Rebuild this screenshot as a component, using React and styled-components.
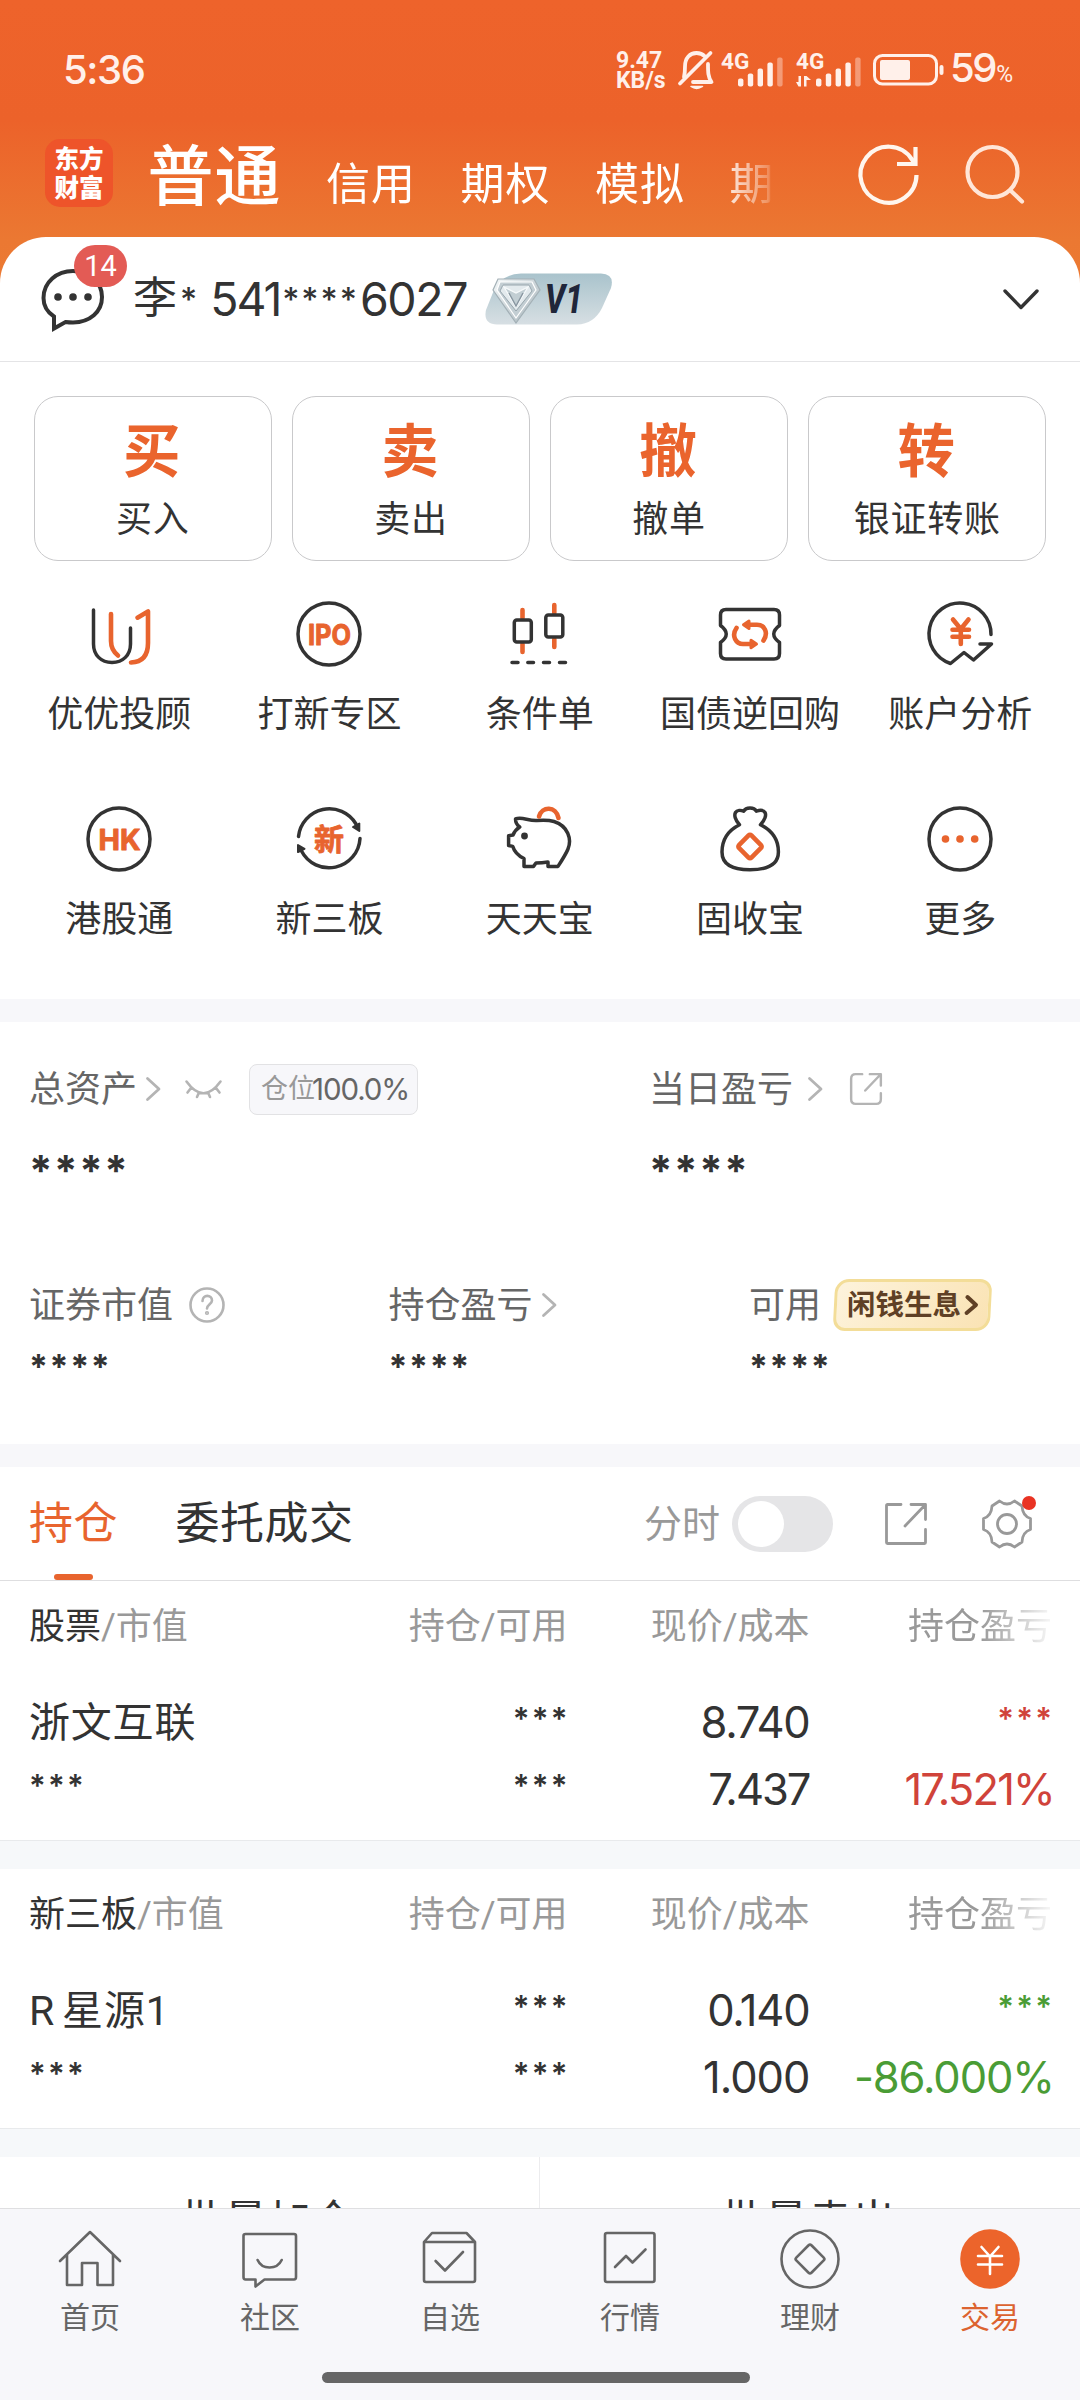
import React from "react";
import styled, { createGlobalStyle } from "styled-components";

const ORANGE = "#e8642e";
const INK = "#333333";
const GREY = "#666666";
const PALE = "#999999";

const GlobalStyle = createGlobalStyle`
  * { box-sizing: border-box; }
  body {
    margin: 0;
    background: #fff;
    font-family: Roboto, "Noto Sans CJK SC", sans-serif;
    color: ${INK};
  }
  svg { display: block; flex: none; overflow: visible; }
`;

const Screen = styled.div`
  width: 1080px;
  height: 2400px;
  display: flex;
  flex-direction: column;
  overflow: hidden;
  background: #fff;
`;

/* ---------- header ---------- */
const Header = styled.header`
  flex: none;
  height: 290px;
  margin-bottom: -53px;
  background: linear-gradient(180deg, #ee632b 0, #ec622a 120px, #eb7832 240px, #ec7a33 290px);
  color: #fff;
`;
const StatusBar = styled.div`
  height: 139px;
  padding: 43px 64px 0 63px;
  display: flex;
  justify-content: space-between;
  align-items: flex-start;
  color: #fff0ea;
`;
const Clock = styled.div`
  font-family: Inter, sans-serif;
  font-size: 40px;
  font-weight: 500;
  line-height: 54px;
  letter-spacing: -1.4px;
`;
const StatusIcons = styled.div`
  display: flex;
  height: 54px;
  align-items: center;
`;
const Speed = styled.div`
  width: 62px;
  padding-top: 2px;
  font-size: 23px;
  font-weight: 700;
  line-height: 20px;
  white-space: nowrap;
`;
const Percent = styled.div`
  display: flex;
  align-items: baseline;
  width: 66px;
  margin-left: 6px;
  padding-top: 2px;
  font-family: Inter, sans-serif;
  font-size: 40px;
  font-weight: 500;
  line-height: 54px;
  letter-spacing: -2.4px;
`;
const PercentSign = styled.span`
  font-family: Roboto, sans-serif;
  font-size: 23px;
  font-weight: 400;
  margin-left: 1px;
`;
const HeaderNav = styled.div`
  height: 68px;
  padding-left: 45px;
  padding-right: 55px;
  display: flex;
`;
const Logo = styled.div`
  width: 68px;
  height: 68px;
  border-radius: 15px;
  background: #ee542a;
  padding-top: 6px;
  font-size: 24.5px;
  font-weight: 900;
  line-height: 29px;
  text-align: center;
`;
const Modes = styled.nav`
  width: 655px;
  height: 100px;
  margin: -16px 0 0 34.5px;
  display: flex;
  align-items: baseline;
  gap: 44.5px;
  overflow: hidden;
  white-space: nowrap;
  line-height: 109px;
  mask-image: linear-gradient(90deg, #000 570px, rgba(0, 0, 0, 0.25) 620px, transparent 624px);
`;
const Mode = styled.span`
  font-size: ${(p) => (p.$active ? 66 : 44)}px;
  font-weight: ${(p) => (p.$active ? 500 : 400)};
  letter-spacing: 1px;
  flex: none;
`;
const HeaderActions = styled.div`
  margin-left: auto;
  padding-top: 5px;
  display: flex;
  gap: 46px;
`;

/* ---------- account ---------- */
const Account = styled.section`
  flex: none;
  height: 125px;
  padding: 0 40px;
  display: flex;
  align-items: center;
  background: #fff;
  border-radius: 46px 46px 0 0;
  border-bottom: 1px solid #e4e4e6;
`;
const Messages = styled.div`
  position: relative;
  width: 66px;
  height: 66px;
`;
const Count = styled.span`
  position: absolute;
  left: 34px;
  top: -21px;
  width: 53px;
  height: 42px;
  border-radius: 21px;
  background: #e35b55;
  color: #fff;
  font-size: 29px;
  line-height: 43px;
  text-align: center;
`;
const AccountName = styled.div`
  display: flex;
  align-items: center;
  margin-left: 27px;
  font-size: 44px;
  line-height: 60px;
  height: 60px;
`;
const Digits = styled.span`
  display: block;
  width: ${(p) => p.$w}px;
  font-family: Inter, sans-serif;
  font-size: 46.5px;
  letter-spacing: ${(p) => p.$track || 0}px;
  white-space: nowrap;
`;
const Stars = styled.span`
  display: block;
  font-family: Inter, sans-serif;
  font-weight: ${(p) => p.$weight || 500};
  font-size: ${(p) => p.$size}px;
  letter-spacing: ${(p) => p.$track || 0}px;
  margin-right: ${(p) => -(p.$track || 0)}px;
  line-height: ${(p) => p.$line}px;
  color: ${(p) => p.$color || "inherit"};
  white-space: nowrap;
`;
const ChevronSlot = styled.div`
  margin-left: auto;
`;

/* ---------- shortcuts ---------- */
const Quick = styled.section`
  flex: none;
  display: grid;
  grid-template-columns: repeat(4, 1fr);
  gap: 20.5px;
  padding: 34px 34px 0;
  height: 199px;
`;
const QuickCard = styled.button`
  display: flex;
  flex-direction: column;
  align-items: center;
  height: 165px;
  padding: 21px 0 0;
  border: 1px solid #c9c9cb;
  border-radius: 24px;
  background: #fff;
  font-family: inherit;
  color: ${INK};
`;
const QuickGlyph = styled.span`
  font-size: 57.5px;
  line-height: 70px;
  font-weight: 700;
  color: #ea642d;
  margin-right: 2px;
`;
const QuickLabel = styled.span`
  font-size: 36px;
  line-height: 50px;
  margin-top: 7px;
  letter-spacing: 0.7px;
`;
const Tools = styled.section`
  flex: none;
  height: 438px;
  padding: 40px 15px 0 13.5px;
  display: grid;
  grid-template-columns: repeat(5, 1fr);
  grid-auto-rows: 205px;
`;
const Tool = styled.div`
  display: flex;
  flex-direction: column;
  align-items: center;
  font-size: 36px;
  line-height: 50px;
  gap: 23px;
  white-space: nowrap;
`;
const ToolLabel = styled.span`
  padding-left: 1px;
`;
const Band = styled.div`
  flex: none;
  height: ${(p) => p.$height}px;
  background: ${(p) => (p.$cool ? "#f6f8fa" : "#f7f7fa")};
  border-top: ${(p) => (p.$cool ? "1px solid #e8eaec" : "none")};
`;

/* ---------- assets ---------- */
const Assets = styled.section`
  flex: none;
  height: 422px;
  padding: 40px 30px 0 29px;
  color: ${GREY};
`;
const AssetRow = styled.div`
  display: grid;
  grid-template-columns: ${(p) => p.$columns};
  height: ${(p) => p.$height}px;
`;
const AssetLine = styled.div`
  display: flex;
  align-items: center;
  height: 54px;
  font-size: 36px;
  line-height: 56px;
  white-space: nowrap;
`;
const AssetName = styled.span`
  padding-top: 1px;
`;
const AssetValue = styled.div`
  padding-top: ${(p) => p.$top}px;
  color: ${INK};
`;
const Gap = styled.span`
  flex: none;
  width: ${(p) => p.$w}px;
`;
const Position = styled.div`
  display: flex;
  align-items: center;
  height: 51px;
  width: 169px;
  padding-left: 11px;
  border: 1px solid #e2e2e4;
  border-radius: 8px;
  background: #f7f7fa;
  font-size: 27px;
  line-height: 50px;
  color: ${PALE};
`;
const PositionValue = styled.span`
  font-family: Inter, sans-serif;
  font-size: 29.5px;
  letter-spacing: -1.1px;
  color: ${GREY};
  margin-left: -3px;
`;
const Interest = styled.div`
  display: flex;
  align-items: center;
  justify-content: center;
  gap: 4px;
  width: 157px;
  height: 52px;
  border: 3px solid #f3dd98;
  border-radius: 14px 12px 14px 12px;
  transform: skewX(-3deg);
  background: linear-gradient(120deg, #fdf3dc, #fae3b4);
  color: #5f4025;
  font-size: 28.5px;
  font-weight: 700;
  line-height: 48px;
`;
const InterestLabel = styled.span`
  padding-top: 1px;
  transform: skewX(3deg);
`;

/* ---------- holdings ---------- */
const Tabs = styled.section`
  flex: none;
  height: 114px;
  padding: 0 48.5px 0 29px;
  display: flex;
  align-items: center;
  border-bottom: 1px solid #dedee0;
`;
const Tab = styled.div`
  display: flex;
  flex-direction: column;
  align-items: center;
  height: 113px;
  padding-top: 26px;
  margin-right: 57.5px;
  font-size: 44px;
  line-height: 62px;
  letter-spacing: 0.5px;
  color: ${(p) => (p.$active ? ORANGE : INK)};
  &::after {
    content: "";
    width: 39px;
    height: 6px;
    margin-top: 19px;
    border-radius: 3px;
    background: ${(p) => (p.$active ? ORANGE : "transparent")};
  }
`;
const TabTools = styled.div`
  margin-left: auto;
  display: flex;
  align-items: center;
  height: 60px;
  font-size: 38px;
  line-height: 60px;
  color: ${PALE};
`;
const Toggle = styled.div`
  width: 101px;
  height: 56px;
  margin: 0 52px 0 12px;
  padding: 5px 6px;
  border-radius: 28px;
  background: #e5e5e7;
  &::before {
    content: "";
    display: block;
    width: 46px;
    height: 46px;
    border-radius: 50%;
    background: #fff;
  }
`;
const GearSlot = styled.div`
  position: relative;
  margin-left: 54.5px;
`;
const Dot = styled.span`
  position: absolute;
  right: -4px;
  top: -3px;
  width: 14px;
  height: 14px;
  border-radius: 50%;
  background: #e93323;
`;
const Table = styled.section`
  flex: none;
  height: ${(p) => p.$height}px;
  padding-top: ${(p) => p.$top}px;
  padding-left: 29px;
`;
const TableRow = styled.div`
  display: grid;
  grid-template-columns: 237px 301.5px 242px 242.5px;
  height: ${(p) => p.$height}px;
  line-height: ${(p) => p.$height}px;
  font-size: ${(p) => p.$size}px;
  color: ${(p) => p.$color || INK};
  white-space: nowrap;
`;
const Cell = styled.div`
  display: flex;
  justify-content: ${(p) => (p.$left ? "flex-start" : "flex-end")};
  color: ${(p) => p.$color || "inherit"};
`;
const Strong = styled.span`
  color: ${INK};
`;
const Fading = styled(Cell)`
  mask-image: linear-gradient(90deg, #000 170px, rgba(0, 0, 0, 0.12) 238px);
`;
const Num = styled.span`
  height: 65px;
  line-height: 65px;
  font-family: Inter, sans-serif;
  font-size: 43.5px;
  letter-spacing: ${(p) => p.$track || 0}px;
  margin-right: ${(p) => p.$edge || 0}px;
`;
const StockName = styled.span`
  display: flex;
  font-size: 41px;
  letter-spacing: 0.8px;
`;
const HoldingBody = styled.div`
  margin-top: 38px;
`;
const Batch = styled.section`
  flex: none;
  height: 51px;
  overflow: hidden;
  display: grid;
  grid-template-columns: 1fr 1fr;
`;
const BatchButton = styled.div`
  padding-top: 34px;
  padding-right: 3px;
  font-size: 43px;
  line-height: 60px;
  letter-spacing: 0.8px;
  text-align: center;
  &:first-child { border-right: 1px solid #ececee; }
`;

/* ---------- bottom bar ---------- */
const BottomBar = styled.nav`
  flex: none;
  height: 192px;
  border-top: 1px solid #dfdfe1;
  background: #f7f7fa;
  display: flex;
  flex-direction: column;
  align-items: center;
`;
const BottomItems = styled.div`
  width: 100%;
  height: 163px;
  padding-top: 18px;
  display: grid;
  grid-template-columns: repeat(6, 1fr);
`;
const BottomItem = styled.div`
  display: flex;
  flex-direction: column;
  align-items: center;
  font-size: 30px;
  line-height: 42px;
  gap: 6px;
  color: ${(p) => (p.$active ? "#dc632f" : GREY)};
`;
const HomeBar = styled.div`
  width: 428px;
  height: 11px;
  margin-right: 8px;
  border-radius: 6px;
  background: #666;
`;

/* ---------- drawings ---------- */
const Line = ({ w = 66, h = w, vb, sw = 3.5, color = INK, children }) => (
  <svg width={w} height={h} viewBox={vb || `0 0 ${w} ${h}`} fill="none" stroke={color}
    strokeWidth={sw} strokeLinecap="round" strokeLinejoin="round">{children}</svg>
);

const Chevron = ({ color = "#b4b4b4" }) => (
  <Line w={15} h={24} sw={2.8} color={color}><path d="M1.5 1.5 13 12 1.5 22.5" /></Line>
);

const Bell = () => (
  <Line w={36} h={38} sw={3.8} color="#fff0ea">
    <path d="M6 26C7 22 7 19 7 15.500C7 7 12 2 18.500 2C22 2 25 3.500 27 5.500M30 13C30 21 30 26 33.500 31H15" />
    <path d="M32.500 2 2 32.500" />
    <path d="M13 35.500H24.500Q18.500 39.500 13 35.500Z" strokeWidth="1.500" fill="#fff0ea" />
  </Line>
);

const Signal = ({ arrows }) => {
  const x = arrows ? 20 : 17;
  return (
    <svg width="64" height="36" viewBox="0 0 64 36" fill="#fff0ea">
      <text x="0" y="17" fontFamily="Roboto" fontWeight="700" fontSize="22.500">4G</text>
      {[8, 13, 18, 24, 29].map((h, i) => (
        <rect key={h} x={x + i * 9.8} y={34.5 - h} width="5.400" height={h} rx="2" opacity={i === 4 ? 0.4 : 1} />
      ))}
      {arrows && <path d="M5 24V34.500H2.500L0 30H2.500V24ZM8 24H10.500L15 28H10.500V34.500H8Z" />}
    </svg>
  );
};

const Battery = () => (
  <svg width="71" height="32" viewBox="0 0 71 32" fill="#fff0ea">
    <rect x="1.500" y="1.500" width="62" height="28.500" rx="8" fill="none" stroke="#fff0ea" strokeWidth="3" />
    <rect x="7" y="6" width="30" height="20" rx="2" />
    <rect x="66.500" y="11" width="4" height="10" rx="2" />
  </svg>
);

const Diamond = () => (
  <svg width="128" height="52" viewBox="0 0 128 52">
    <defs>
      <linearGradient id="plate" x1="0" y1="0" x2="0" y2="1">
        <stop offset="0" stopColor="#a9c3cc" /><stop offset="1" stopColor="#d7dfe3" />
      </linearGradient>
      <linearGradient id="gem" x1="0" y1="0" x2="1" y2="1">
        <stop offset="0" stopColor="#f5f9fa" /><stop offset="1" stopColor="#a3b1b8" />
      </linearGradient>
    </defs>
    <path d="M36 .5H116Q130 1 126 15L117 35Q109 51 92 51.500H12Q-2 51 1 37L9 17Q17 1 36 .5Z" fill="url(#plate)" />
    <path d="M13 6H49L55 17 31 50 8 17Z" fill="url(#gem)" stroke="#a3b0b6" strokeWidth="1.200" />
    <path d="M15 9H47L51 17 31 45 12 17Z" fill="#c3ced3" stroke="#fff" strokeWidth="1.200" />
    <path d="M18 12H44L47 18 31 38 15 18Z" fill="#e3eaed" stroke="#98a6ad" strokeWidth="1" />
    <path d="M19 14 31 20 43 14 31 34Z" fill="#c2ced3" stroke="#f7fafb" strokeWidth="1.200" />
    <path d="M24 20 31 33 38 20" fill="none" stroke="#8896a0" strokeWidth="1.400" />
    <text x="60" y="40" fontFamily="Roboto" fontSize="40" fontWeight="800" fontStyle="italic" fill="#20263a" textLength="38" lengthAdjust="spacingAndGlyphs">V1</text>
  </svg>
);

const ShareBox = ({ w, sw, color, r = 3 }) => (
  <svg width={w} height={w} viewBox="0 0 42 42" fill="none" stroke={color} strokeWidth={sw} strokeLinecap="round" strokeLinejoin="round">
    <path d={`M16 1.500H${1.5 + r}Q1.500 1.500 1.500 ${1.5 + r}V${40.5 - r}Q1.500 40.500 ${1.5 + r} 40.500H${40.5 - r}Q40.500 40.500 40.500 ${40.5 - r}V26.500M26 1.500H40.500V16.500M40 2 20 23`} />
  </svg>
);

const toolIcons = {
  advisor: (
    <Line>
      <path d="M7.500 9V43C7.500 54 15 61.500 26 61.500S44.500 54 44.500 43V27" />
      <g stroke={ORANGE} strokeWidth="4.600">
        <path d="M25 13V40Q25 49 32 54.500M51.500 16.700 62 10.500V42Q62 61 45 61.500" />
      </g>
    </Line>
  ),
  ipo: (
    <Line>
      <circle cx="33" cy="33" r="31" />
      <text x="12" y="43.500" fill={ORANGE} stroke={ORANGE} strokeWidth="1" fontFamily="Inter" fontWeight="700" fontSize="28.500" textLength="43" lengthAdjust="spacingAndGlyphs">IPO</text>
    </Line>
  ),
  candles: (
    <Line>
      <g stroke={ORANGE} strokeWidth="4.600"><path d="M16.500 9V17M16.500 43V51M48.300 4V12M48.300 38V46" /></g>
      <rect x="8.300" y="19" width="17" height="22" rx="2.500" />
      <rect x="39.800" y="14" width="17" height="22" rx="2.500" />
      <path d="M6 61.500H12M21.800 61.500H27.500M37.500 61.500H43.500M53.500 61.500H59.500" />
    </Line>
  ),
  ticket: (
    <Line>
      <path d="M9 8.500H57Q62.500 8.500 62.500 14V24.500Q51 33 62.500 41.500V52.500Q62.500 58 57 58H9Q3.500 58 3.500 52.500V41.500Q15 33 3.500 24.500V14Q3.500 8.500 9 8.500Z" />
      <g stroke={ORANGE} strokeWidth="4.600">
        <path d="M46.500 39.500C52 31 47 23.700 40 23.700H32M19.500 27C14 35 19 43 26 43H34" />
        <path d="M26.500 23.700 32 20V27.500ZM39.500 43 34 39.300V46.700Z" fill={ORANGE} strokeWidth="3" />
      </g>
    </Line>
  ),
  analysis: (
    <Line>
      <path d="M64 33.500A31 31 0 1 0 23.500 62.500L37 51.500 46.500 59 64.500 43H53" />
      <g stroke={ORANGE} strokeWidth="4.600"><path d="M26 18.500 33.800 28 41.500 18.500M25.500 28.700H42M25.500 35.700H42M33.800 29V43" /></g>
    </Line>
  ),
  hk: (
    <Line>
      <circle cx="33" cy="33" r="31" />
      <text x="12.500" y="43.500" fill={ORANGE} stroke={ORANGE} strokeWidth="1" fontFamily="Inter" fontWeight="700" fontSize="28.500" textLength="42" lengthAdjust="spacingAndGlyphs">HK</text>
    </Line>
  ),
  board: (
    <Line>
      <path d="M2.500 30.500A31 31 0 0 1 60 18M64 32.500A31 31 0 0 1 5.500 45" />
      <path d="M57 21 63.300 17.500V25ZM2 46V39L8.500 42.800Z" fill={INK} strokeWidth="2" />
      <text x="33" y="44" textAnchor="middle" fill={ORANGE} stroke={ORANGE} strokeWidth=".8" fontFamily="Noto Sans CJK SC" fontWeight="700" fontSize="30">新</text>
    </Line>
  ),
  pig: (
    <Line>
      <path d="M9.500 13C16 10.500 22 15 31 14.500C38 14 43 14 48 15.500C62 20 66 33 62 43Q60 48 52 60.400H42V56Q36 57 30 57L27.500 60.400H18V52.500Q9 48 6.800 40.400L2.600 39.500V29.700L7 29Q9 24 13.700 21Q9.500 18 9.500 13Z" />
      <circle cx="18.500" cy="30" r="3.400" fill={INK} stroke="none" />
      <path d="M33 10.500C36 0 50 0 52.500 12" stroke={ORANGE} strokeWidth="4.600" />
    </Line>
  ),
  bag: (
    <Line>
      <path d="M22.500 18.700C18 14 17 9 18.500 6.500C20 4 24 4 26.700 5.200C29 1 37 1 39.400 5.200C43 4 46.500 4 48 6.500C49.500 9 48 14 43.500 18.700C56 25 61.500 34 61.400 46C61.400 59 49 63.700 33 63.700S5 59 5 46C5 34 10 25 22.500 18.700Z" />
      <rect x="24.200" y="31.700" width="17.600" height="17.600" rx="2" transform="rotate(45 33 40.500)" stroke={ORANGE} strokeWidth="4.600" />
    </Line>
  ),
  more: (
    <Line>
      <circle cx="33" cy="33" r="31" />
      <g fill={ORANGE} stroke="none">
        <circle cx="18.500" cy="33" r="3.800" /><circle cx="33" cy="33" r="3.800" /><circle cx="47.700" cy="33" r="3.800" />
      </g>
    </Line>
  ),
};

const navIcons = {
  home: <path d="M2 34 32 5 62 34M9 28V58H24V36H39.500V58H55V28" />,
  chat: <path d="M7.500 7H56Q58 7 58 9V50Q58 52.500 56 52.500H26.500L17.500 59.500V52.500H7.500Q5.500 52.500 5.500 50V9Q5.500 7 7.500 7ZM19.600 33C24 43 39 43 43.700 33" />,
  box: <path d="M6 15 14 6H48.500L57 15V53Q57 55 55 55H8Q6 55 6 53ZM6 15H57M17.600 34 27 43.500 45 25" />,
  chart: <path d="M9 6H54.500Q56.500 6 56.500 8V53Q56.500 55 54.500 55H9Q7 55 7 53V8Q7 6 9 6ZM17 40 28 29 34.500 35.500 47.500 22.500" />,
  coin: <><circle cx="32" cy="32" r="28.500" /><rect x="21.300" y="21.300" width="21.400" height="21.400" rx="2" transform="rotate(45 32 32)" /></>,
  trade: <><circle cx="32" cy="32" r="29.800" fill="#ec642b" stroke="none" /><path d="M23.500 20 32 29.500 40.500 20M20 29H44M20 37.500H44M32 29V47" stroke="#fff" /></>,
};

const quick = [["买", "买入"], ["卖", "卖出"], ["撤", "撤单"], ["转", "银证转账"]];
const tools = [
  ["advisor", "优优投顾"], ["ipo", "打新专区"], ["candles", "条件单"], ["ticket", "国债逆回购"], ["analysis", "账户分析"],
  ["hk", "港股通"], ["board", "新三板"], ["pig", "天天宝"], ["bag", "固收宝"], ["more", "更多"],
];
const bottom = [["home", "首页"], ["chat", "社区"], ["box", "自选"], ["chart", "行情"], ["coin", "理财"], ["trade", "交易"]];

const Small = ({ color }) => <Stars $size={31} $track={2.3} $line={58} $weight={600} $color={color}>***</Stars>;
const Total = () => <AssetValue $top={5}><Stars $size={42} $weight={700} $line={100} $track={1.6}>****</Stars></AssetValue>;
const SubTotal = () => <AssetValue $top={4}><Stars $size={34} $weight={700} $line={62} $track={1.6}>****</Stars></AssetValue>;

const Holding = ({ kind, name, price, cost, rate, color, height, top }) => (
  <Table $height={height} $top={top}>
    <TableRow $height={50} $size={36} $color={PALE}>
      <Cell $left><Strong>{kind}</Strong>/市值</Cell>
      <Cell>持仓/可用</Cell>
      <Cell>现价/成本</Cell>
      <Fading>持仓盈亏</Fading>
    </TableRow>
    <HoldingBody>
      <TableRow $height={67} $size={41}>
        <Cell $left><StockName>{name}</StockName></Cell>
        <Cell><Small /></Cell>
        <Cell><Num $track={price.track}>{price.value}</Num></Cell>
        <Cell><Small color={color} /></Cell>
      </TableRow>
      <TableRow $height={67} $size={41}>
        <Cell $left><Small /></Cell>
        <Cell><Small /></Cell>
        <Cell><Num $track={cost.track}>{cost.value}</Num></Cell>
        <Cell $color={color}><Num $track={rate.track} $edge={-2}>{rate.value}</Num></Cell>
      </TableRow>
    </HoldingBody>
  </Table>
);

export default function App() {
  return (
    <Screen>
      <GlobalStyle />
      <Header>
        <StatusBar>
          <Clock>5:36</Clock>
          <StatusIcons>
            <Speed>9.47<br />KB/s</Speed>
            <Bell />
            <Gap $w={7} />
            <Signal />
            <Gap $w={11} />
            <Signal arrows />
            <Gap $w={13} />
            <Battery />
            <Percent>59<PercentSign>%</PercentSign></Percent>
          </StatusIcons>
        </StatusBar>
        <HeaderNav>
          <Logo>东方<br />财富</Logo>
          <Modes>
            <Mode $active>普通</Mode>
            <Mode>信用</Mode>
            <Mode>期权</Mode>
            <Mode>模拟</Mode>
            <Mode>期</Mode>
          </Modes>
          <HeaderActions>
            <Line w={60} sw={4.2} color="#fff6ee">
              <path d="M57.500 31A28 28 0 1 1 53 15.500L56 20" strokeLinecap="butt" />
              <path d="M56.500 3V20H38" strokeLinecap="butt" strokeLinejoin="miter" />
            </Line>
            <Line w={60} sw={4.2} color="#ffe6d8">
              <circle cx="27.500" cy="28" r="25" /><path d="M45.500 46.500 57 57.500" />
            </Line>
          </HeaderActions>
        </HeaderNav>
      </Header>

      <Account>
        <Messages>
          <Line w={66} sw={4}>
            <path d="M14 50.500C7 46 3.500 39 3.500 32C3.500 16 17 5 33 5S62 16 62 31S50 56 33 56.500Q29 56.500 25.500 56L14 62.500Z" strokeLinejoin="miter" />
            <g fill={INK} stroke="none"><circle cx="18" cy="31" r="3.800" /><circle cx="33" cy="31" r="3.800" /><circle cx="48" cy="31" r="3.800" /></g>
          </Line>
          <Count>14</Count>
        </Messages>
        <AccountName>
          <span>李</span>
          <Gap $w={3} />
          <Stars $size={33} $line={52}>*</Stars>
          <Gap $w={13} />
          <Digits $w={72} $track={-2}>541</Digits>
          <Stars $size={33} $line={52} $track={2}>****</Stars>
          <Gap $w={3} />
          <Digits $w={106} $track={-1.4}>6027</Digits>
          <Gap $w={19} />
          <Diamond />
        </AccountName>
        <ChevronSlot>
          <Line w={38} h={22} sw={3.4}><path d="M3 3 19 19.500 35 3" /></Line>
        </ChevronSlot>
      </Account>

      <Quick>
        {quick.map(([glyph, label]) => (
          <QuickCard key={glyph}><QuickGlyph>{glyph}</QuickGlyph><QuickLabel>{label}</QuickLabel></QuickCard>
        ))}
      </Quick>
      <Tools>
        {tools.map(([icon, label]) => <Tool key={icon}>{toolIcons[icon]}<ToolLabel>{label}</ToolLabel></Tool>)}
      </Tools>

      <Band $height={23} />
      <Assets>
        <AssetRow $columns="620px 1fr" $height={216}>
          <div>
            <AssetLine>
              <AssetName>总资产</AssetName><Gap $w={9} /><Chevron /><Gap $w={24} />
              <Line w={37} h={18} sw={2.6} color="#b4b4b4">
                <path d="M1.500 1.500Q18.500 25 35.500 1.500M6 8 2.500 12.500M14 12.500 12 17M23 12.500 25 17M31 8 34.500 12.500" />
              </Line>
              <Gap $w={27} />
              <Position>仓位<PositionValue>100.0%</PositionValue></Position>
            </AssetLine>
            <Total />
          </div>
          <div>
            <AssetLine>
              <AssetName>当日盈亏</AssetName><Gap $w={15} /><Chevron /><Gap $w={27} /><ShareBox w={32} sw={3.2} color="#b4b4b4" r={6} />
            </AssetLine>
            <Total />
          </div>
        </AssetRow>
        <AssetRow $columns="359.5px 360.5px 1fr" $height={130}>
          <div>
            <AssetLine>
              <AssetName>证券市值</AssetName><Gap $w={16} />
              <Line w={36} sw={2.6} color="#b4b4b4">
                <circle cx="18" cy="18" r="16.500" />
                <path d="M13.500 14C13.500 7 23 7.500 23 13.500C23 17 18 17.500 18 21.500" />
                <circle cx="18" cy="26" r=".8" />
              </Line>
            </AssetLine>
            <SubTotal />
          </div>
          <div>
            <AssetLine><AssetName>持仓盈亏</AssetName><Gap $w={9} /><Chevron /></AssetLine>
            <SubTotal />
          </div>
          <div>
            <AssetLine>
              <AssetName>可用</AssetName><Gap $w={13} />
              <Interest>
                <InterestLabel>闲钱生息</InterestLabel>
                <Line w={13} h={20} sw={4} color="#5f4025"><path d="M2 2 11 10 2 18" /></Line>
              </Interest>
            </AssetLine>
            <SubTotal />
          </div>
        </AssetRow>
      </Assets>

      <Band $height={23} />
      <Tabs>
        <Tab $active>持仓</Tab>
        <Tab>委托成交</Tab>
        <TabTools>
          分时
          <Toggle />
          <ShareBox w={42} sw={2.8} color={PALE} r={1} />
          <GearSlot>
            <Line w={50} sw={2.8} color={PALE}>
              <path d="M1.500 19.500Q9.500 17 10 7L17.500 2Q25 8 32.500 2L40 7Q40.500 17 48.500 19.500V30.500Q40.500 33 40 43L32.500 48Q25 42 17.500 48L10 43Q9.500 33 1.500 30.500Z" />
              <circle cx="25" cy="25" r="9.500" />
            </Line>
            <Dot />
          </GearSlot>
        </TabTools>
      </Tabs>

      <Holding kind="股票" name="浙文互联" height={259} top={21} color="#d0433a"
        price={{ value: "8.740", track: -1.3 }} cost={{ value: "7.437", track: -2 }} rate={{ value: "17.521%", track: -1.8 }} />
      <Band $height={29} $cool />
      <Holding kind="新三板" name={<>R<Gap $w={7} />星源1</>} height={259} top={21} color="#4a9c35"
        price={{ value: "0.140", track: -1.2 }} cost={{ value: "1.000", track: -1 }} rate={{ value: "-86.000%", track: -1.1 }} />
      <Band $height={29} $cool />
      <Batch>
        <BatchButton>批量加仓</BatchButton>
        <BatchButton>批量卖出</BatchButton>
      </Batch>

      <BottomBar>
        <BottomItems>
          {bottom.map(([icon, label]) => (
            <BottomItem key={icon} $active={icon === "trade"}>
              <Line w={64} sw={2.6} color={GREY}>{navIcons[icon]}</Line>
              <span>{label}</span>
            </BottomItem>
          ))}
        </BottomItems>
        <HomeBar />
      </BottomBar>
    </Screen>
  );
}
